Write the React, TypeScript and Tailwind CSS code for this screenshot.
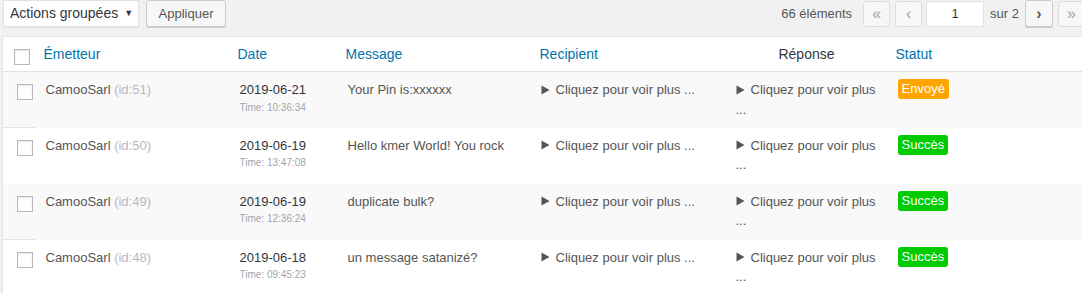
import React from "react";

type Row = {
  id: number;
  date: string;
  time: string;
  message: string;
  status: "Envoyé" | "Succès";
};

const rows: Row[] = [
  { id: 51, date: "2019-06-21", time: "10:36:34", message: "Your Pin is:xxxxxx", status: "Envoyé" },
  { id: 50, date: "2019-06-19", time: "13:47:08", message: "Hello kmer World! You rock", status: "Succès" },
  { id: 49, date: "2019-06-19", time: "12:36:24", message: "duplicate bulk?", status: "Succès" },
  { id: 48, date: "2019-06-18", time: "09:45:23", message: "un message satanizé?", status: "Succès" },
];

function Checkbox() {
  return (
    <span className="block w-[16px] h-[16px] border border-[#b4b9be] bg-white shadow-[inset_0_1px_2px_rgba(0,0,0,0.1)]" />
  );
}

function Arrow() {
  return (
    <svg width="9" height="10" viewBox="0 0 9 10" className="inline-block mr-[6px] -mt-[2px] align-middle">
      <path d="M0.5 0.5 L8.5 5 L0.5 9.5 Z" fill="#555" />
    </svg>
  );
}

function PageButton({ label, active }: { label: string; active?: boolean }) {
  return (
    <span
      className={
        active
          ? "flex items-center justify-center w-[28px] h-[27px] rounded-[3px] border border-[#ccc] bg-[#f7f7f7] text-[#555] text-[16px] font-bold shadow-[0_1px_0_#ccc]"
          : "flex items-center justify-center w-[27px] h-[26px] rounded-[3px] border border-[#ddd] bg-[#f7f7f7] text-[#a0a5aa] text-[16px]"
      }
    >
      {label}
    </span>
  );
}

function Badge({ status }: { status: Row["status"] }) {
  return (
    <span
      className={`inline-block px-[4px] rounded-[3px] text-white text-[13px] leading-[20px] ${
        status === "Envoyé" ? "bg-[#ffa500]" : "bg-[#00cc00]"
      }`}
    >
      {status}
    </span>
  );
}

export default function App() {
  return (
    <div
      className="w-[1082px] h-[293px] overflow-hidden bg-[#f1f1f1] text-[#555]"
      style={{ fontFamily: '"Liberation Sans", Arial, sans-serif' }}
    >
      <div className="w-[1085px] pl-[2px]">
        {/* tablenav */}
        <div className="h-[36px] flex items-start justify-between">
          <div className="flex items-start gap-[7px] ml-[1px]">
            <div className="flex items-center h-[27px] w-[136px] bg-white border border-[#e2e2e2] pl-[6px] text-[14px] text-[#32373c] shadow-[0_1px_1px_rgba(0,0,0,0.04)]">
              <span>Actions groupées</span>
              <span className="ml-[6px] text-[9px]">▼</span>
            </div>
            <div className="flex items-center justify-center h-[27px] w-[80px] rounded-[3px] border border-[#ccc] bg-[#f7f7f7] text-[13px] text-[#555] shadow-[0_1px_0_#ccc]">
              Appliquer
            </div>
          </div>
          <div className="flex items-center h-[27px] text-[13px] text-[#555]">
            <span className="mr-[11px]">66 éléments</span>
            <PageButton label="«" />
            <span className="w-[5px]" />
            <PageButton label="‹" />
            <span className="w-[4px]" />
            <span className="flex items-center justify-center w-[58px] h-[26px] bg-white border border-[#e2e2e2] text-[13px] text-[#32373c]">
              1
            </span>
            <span className="mx-[6px]">sur 2</span>
            <PageButton label="›" active />
            <span className="w-[5px]" />
            <PageButton label="»" />
          </div>
        </div>

        {/* list table */}
        <table className="table-fixed w-[1083px] bg-white border-l border-t border-[#e5e5e5]">
          <colgroup>
            <col className="w-[33px]" />
            <col className="w-[194px]" />
            <col className="w-[108px]" />
            <col className="w-[194px]" />
            <col className="w-[194px]" />
            <col className="w-[162px]" />
            <col />
          </colgroup>
          <thead>
            <tr className="h-[35px] border-b border-[#e1e1e1] text-[14px]">
              <td className="align-top pt-[12px] pl-[11px]">
                <Checkbox />
              </td>
              <th className="text-left font-normal pl-[8px] text-[#0073aa]">Émetteur</th>
              <th className="text-left font-normal pl-[8px] text-[#0073aa]">Date</th>
              <th className="text-left font-normal pl-[8px] text-[#0073aa]">Message</th>
              <th className="text-left font-normal pl-[8px] text-[#0073aa]">Recipient</th>
              <th className="text-center font-normal text-[#32373c]">Réponse</th>
              <th className="text-left font-normal pl-[8px] text-[#0073aa]">Statut</th>
            </tr>
          </thead>
          <tbody className="text-[13px] leading-[19.5px]">
            {rows.map((r, i) => {
              const striped = i % 2 === 0;
              return (
                <tr key={r.id} className={`h-[56px] align-top ${striped ? "bg-[#f9f9f9]" : "bg-white"}`}>
                  <td className={`pt-[12px] pl-[14px] ${striped ? "" : "border-t border-[#e5e5e5]"}`}>
                    <Checkbox />
                  </td>
                  <td className="pt-[8px] pl-[10px]">
                    CamooSarl <span className="text-[#b4b9be]">(id:{r.id})</span>
                  </td>
                  <td className="pt-[8px] pl-[10px]">
                    <div className="text-[#32373c]">{r.date}</div>
                    <div className="text-[10px] leading-[15px] text-[#a0a5aa]">Time: {r.time}</div>
                  </td>
                  <td className="pt-[8px] pl-[10px]">{r.message}</td>
                  <td className="pt-[8px] pl-[9px]">
                    <Arrow />
                    Cliquez pour voir plus ...
                  </td>
                  <td className="pt-[8px] pl-[10px] pr-[8px]">
                    <Arrow />
                    Cliquez pour voir plus ...
                  </td>
                  <td className="pt-[7px] pl-[10px]">
                    <Badge status={r.status} />
                  </td>
                </tr>
              );
            })}
          </tbody>
        </table>
      </div>
    </div>
  );
}
